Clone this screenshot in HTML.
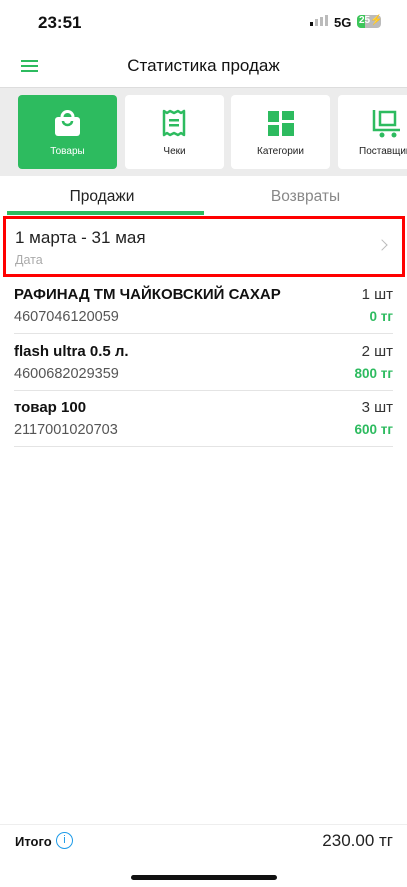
<!DOCTYPE html>
<html><head><meta charset="utf-8"><style>
*{margin:0;padding:0;box-sizing:border-box}
body{width:407px;height:887px;background:#fff;font-family:"Liberation Sans",sans-serif;position:relative;overflow:hidden;color:#111}
.a{position:absolute}
.card{position:absolute;top:95px;width:99px;height:74px;background:#fff;border-radius:4px;font-size:10px;text-align:center;color:#222}
.card span{position:absolute;left:0;right:0;top:51px;white-space:nowrap}
.row{position:absolute;left:14px;right:14px;height:56px;border-bottom:1px solid #e4e4e4}
.t{position:absolute;left:0;top:8px;font-weight:bold;font-size:15px}
.c{position:absolute;left:0;top:31px;font-size:14.5px;color:#555}
.q{position:absolute;right:0;top:8px;font-size:15px;color:#333}
.p{position:absolute;right:0;top:31px;font-size:13.5px;font-weight:bold;color:#2dbb5f}
</style></head><body>
<div class="a" style="left:38px;top:13px;font-size:17px;font-weight:bold">23:51</div>
<div class="a" style="left:310px;top:22px;width:3px;height:4px;background:#111"></div>
<div class="a" style="left:315px;top:19px;width:3px;height:7px;background:#bbb"></div>
<div class="a" style="left:320px;top:17px;width:3px;height:9px;background:#bbb"></div>
<div class="a" style="left:325px;top:15px;width:3px;height:11px;background:#bbb"></div>
<div class="a" style="left:334px;top:15px;font-size:13px;font-weight:bold">5G</div>
<div class="a" style="left:357px;top:15px;width:24px;height:13px;border-radius:4px;background:#bbb"></div>
<div class="a" style="left:357px;top:15px;width:8px;height:13px;border-radius:4px 0 0 4px;background:#3cc65a"></div>
<div class="a" style="left:359px;top:15px;font-size:10px;font-weight:bold;color:#fff">25⚡</div>
<div class="a" style="left:21px;top:60px;width:17px;height:2px;background:#2dbb5f;box-shadow:0 5px 0 #2dbb5f,0 10px 0 #2dbb5f"></div>
<div class="a" style="left:0;right:0;top:56px;text-align:center;font-size:17px;color:#111">Статистика продаж</div>
<div class="a" style="left:0;right:0;top:87px;height:89px;background:#ececec;border-top:1px solid #ddd"></div>
<div class="card" style="left:18px;background:#2dbb5f;color:#fff"><svg class="a" style="left:36px;top:15px" width="27" height="27" viewBox="0 0 27 27"><rect x="1" y="7" width="25" height="19" rx="3" fill="#fff"/><path d="M8 10V7a5.5 5.5 0 0 1 11 0v3" stroke="#fff" stroke-width="3" fill="none"/><path d="M9 11a4.5 4 0 0 0 9 0" stroke="#2dbb5f" stroke-width="2.5" fill="none"/></svg><span>Товары</span></div>
<div class="card" style="left:125px"><svg class="a" style="left:37px;top:14px" width="24" height="28" viewBox="0 0 24 28"><path d="M2 2l3 2 3-2 4 2 4-2 3 2 3-2v24l-3-2-3 2-4-2-4 2-3-2-3 2z" stroke="#2dbb5f" stroke-width="2.5" fill="none" stroke-linejoin="round"/><rect x="7" y="10" width="10" height="2.5" fill="#2dbb5f"/><rect x="7" y="15" width="10" height="2.5" fill="#2dbb5f"/></svg><span>Чеки</span></div>
<div class="card" style="left:231px"><svg class="a" style="left:37px;top:16px" width="26" height="25" viewBox="0 0 26 25"><rect x="0" y="0" width="11" height="25" fill="#2dbb5f"/><rect x="14" y="0" width="12" height="9" fill="#2dbb5f"/><rect x="14" y="12" width="12" height="13" fill="#2dbb5f"/><rect x="0" y="11" width="11" height="3" fill="#fff"/></svg><span>Категории</span></div>
<div class="card" style="left:338px;width:80px"><svg class="a" style="left:34px;top:15px" width="28" height="28" viewBox="0 0 28 28"><path d="M2 0v20h26" stroke="#2dbb5f" stroke-width="2.5" fill="none"/><rect x="8" y="2" width="15" height="13" stroke="#2dbb5f" stroke-width="2.5" fill="none"/><circle cx="10" cy="25" r="2.5" fill="#2dbb5f"/><circle cx="22" cy="25" r="2.5" fill="#2dbb5f"/></svg><span style="left:21px;text-align:left">Поставщики</span></div>
<div class="a" style="left:0;width:204px;top:188px;text-align:center;font-size:15.5px;color:#222">Продажи</div>
<div class="a" style="left:204px;right:0;top:188px;text-align:center;font-size:15.5px;color:#888">Возвраты</div>
<div class="a" style="left:7px;width:197px;top:211px;height:4px;background:#2dbb5f"></div>
<div class="a" style="left:3px;top:216px;width:402px;height:61px;border:3px solid #f00"></div>
<div class="a" style="left:15px;top:228px;font-size:17px;color:#222">1 марта - 31 мая</div>
<div class="a" style="left:15px;top:253px;font-size:12.5px;color:#aaa">Дата</div>
<div class="a" style="left:378px;top:241px;width:8px;height:8px;border-right:1.5px solid #bbb;border-top:1.5px solid #bbb;transform:rotate(45deg)"></div>
<div class="row" style="top:278px"><div class="t">РАФИНАД ТМ ЧАЙКОВСКИЙ САХАР</div><div class="c">4607046120059</div><div class="q">1 шт</div><div class="p">0 тг</div></div>
<div class="row" style="top:335px"><div class="t">flash ultra 0.5 л.</div><div class="c">4600682029359</div><div class="q">2 шт</div><div class="p">800 тг</div></div>
<div class="row" style="top:391px"><div class="t">товар 100</div><div class="c">2117001020703</div><div class="q">3 шт</div><div class="p">600 тг</div></div>
<div class="a" style="left:0;right:0;top:824px;height:1px;background:#eee"></div>
<div class="a" style="left:15px;top:834px;font-size:13px;font-weight:bold">Итого</div>
<div class="a" style="left:56px;top:832px;width:17px;height:17px;border:1.5px solid #1e9be8;border-radius:50%;color:#1e9be8;font-size:11px;text-align:center;line-height:14px">i</div>
<div class="a" style="right:14px;top:831px;font-size:17px;color:#222">230.00 тг</div>
<div class="a" style="left:131px;top:875px;width:146px;height:5px;border-radius:3px;background:#111"></div>
</body></html>
